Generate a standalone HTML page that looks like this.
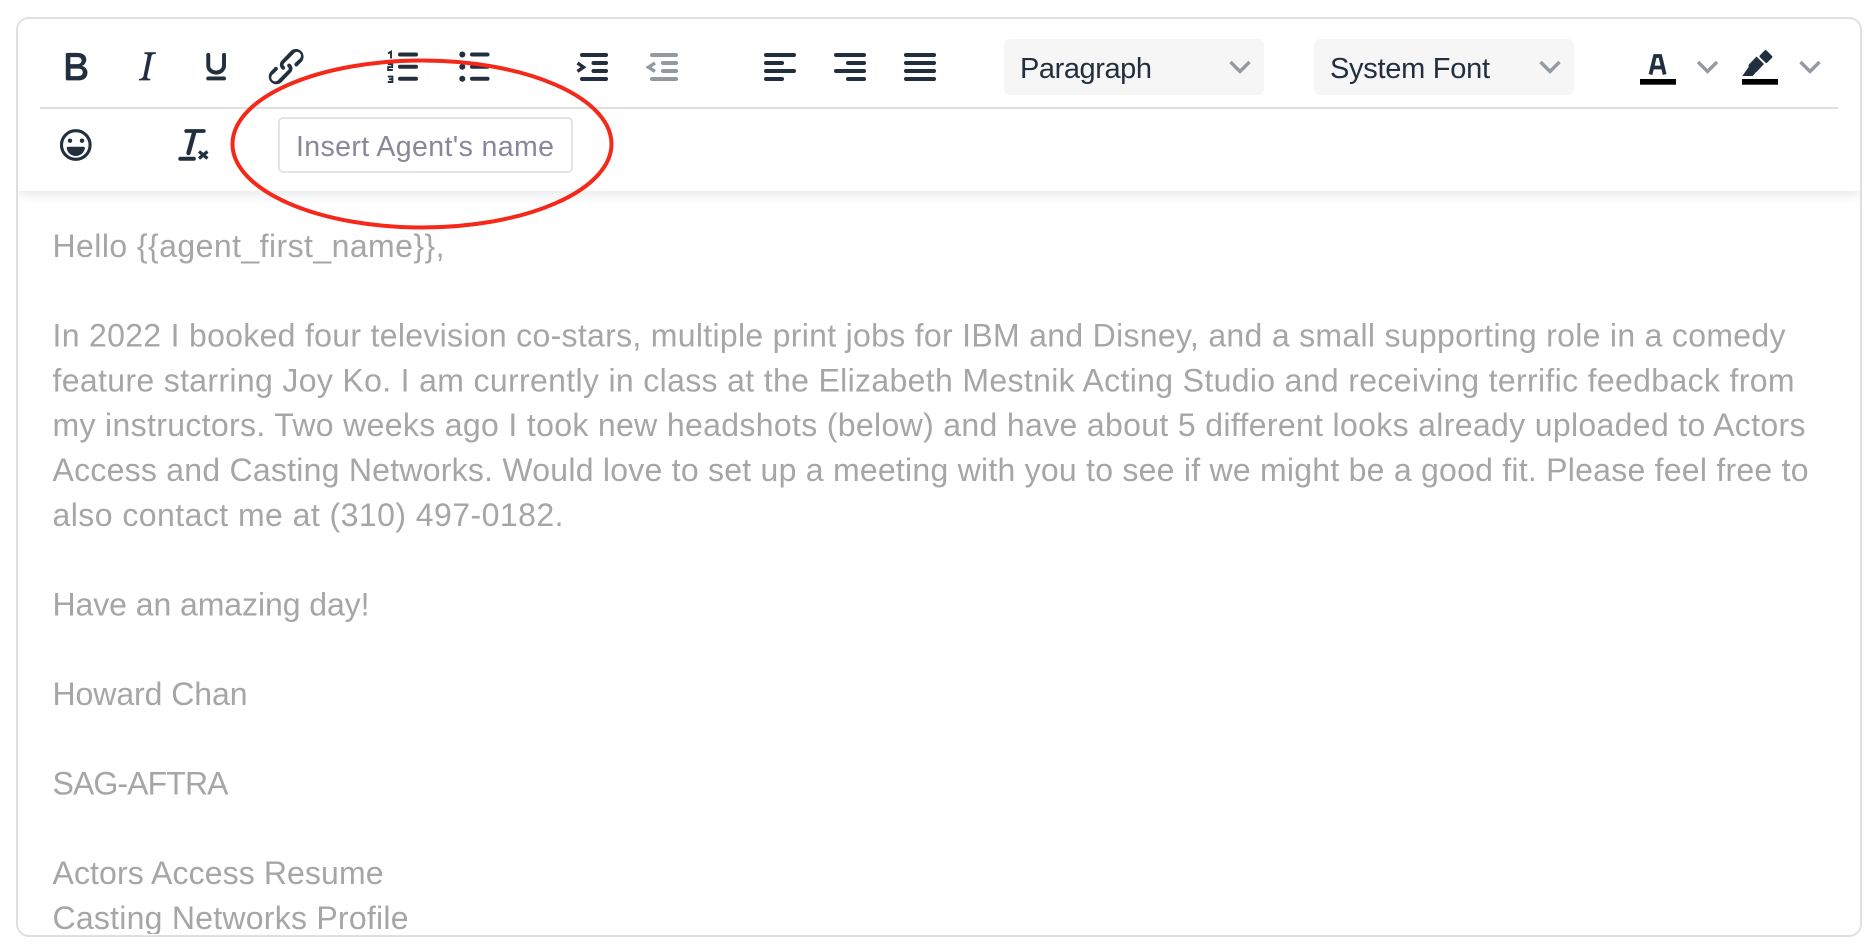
<!DOCTYPE html>
<html lang="en">
<head>
<meta charset="utf-8">
<title>Editor</title>
<style>
html,body{margin:0;padding:0;background:#fff;width:1874px;height:948px;overflow:hidden}
#box{position:absolute;left:16px;top:17px;width:1846px;height:920px;box-sizing:border-box;border:2px solid #e0e0e0;border-radius:13px;overflow:hidden;background:#fff}
#bar{position:absolute;left:0;top:0;right:0;height:172px;background:#fff;box-shadow:0 3px 10px rgba(34,47,62,.12)}
svg{position:absolute;left:0;top:0}
text{font-family:"Liberation Sans",sans-serif}
.t{font-size:32px;fill:#a6a6a6}
.i{fill:#222f3e}
.l{stroke:#222f3e;stroke-width:4;stroke-linecap:round;fill:none}
.c{stroke:#949aa1;stroke-width:3.4;fill:none}
.blur{filter:blur(.35px)}
</style>
</head>
<body>
<div id="box"><div id="bar"></div></div>
<svg width="1874" height="948" viewBox="0 0 1874 948">
<defs><clipPath id="cp"><rect x="18" y="192" width="1842" height="742"/></clipPath></defs>

<!-- toolbar separators and pills -->
<rect x="40" y="107" width="1798" height="2" fill="#e0e0e0"/>
<rect x="1004" y="39" width="260" height="56" rx="6" fill="#f6f6f6"/>
<rect x="1314" y="39" width="260" height="56" rx="6" fill="#f6f6f6"/>
<g class="blur">
<text x="1020" y="78" font-size="29" fill="#222f3e" textLength="132" lengthAdjust="spacing">Paragraph</text>
<text x="1330" y="78" font-size="29" fill="#222f3e" textLength="160" lengthAdjust="spacing">System Font</text>
</g>

<g class="blur">
<!-- bold italic underline link -->
<g class="i" transform="translate(52,43) scale(1.97)"><path d="M7.8 19c-.3 0-.5 0-.6-.2l-.2-.5V5.7c0-.2 0-.4.2-.5l.6-.2h5c1.5 0 2.7.3 3.5 1 .7.6 1.1 1.4 1.1 2.5a3 3 0 01-.6 1.9c-.4.6-1 1-1.6 1.2.4.1.9.3 1.3.6s.8.7 1 1.2c.4.4.5 1 .5 1.6 0 1.3-.4 2.3-1.3 3-.8.7-2.1 1-3.8 1H7.8zm5-8.3c.6 0 1.2-.1 1.6-.5.4-.3.6-.7.6-1.3 0-1.1-.8-1.7-2.3-1.7H9.3v3.5h3.4zm.5 6c.7 0 1.3-.1 1.7-.4.4-.4.6-.9.6-1.5s-.2-1-.7-1.4c-.4-.3-1-.4-2-.4H9.4v3.8h4z"/></g>
<g class="i" transform="translate(123,43) scale(1.97)"><path d="M16.7 4.7l-.1.9h-.3c-.6 0-1 0-1.4.3-.3.3-.4.6-.5 1.1l-2.1 9.8v.6c0 .5.4.8 1.4.8h.2l-.2.8H8l.2-.8h.2c1.1 0 1.8-.5 2-1.5l2-9.8.1-.5c0-.6-.4-.8-1.4-.8h-.3l.2-.9h5.8z"/></g>
<g class="i" transform="translate(192.5,43) scale(1.97)"><path d="M16 5c.6 0 1 .4 1 1v5.500a4 4 0 01-.4 1.800l-1 1.400a5.300 5.300 0 01-5.500 1 5 5 0 01-1.600-1c-.5-.4-.8-.9-1.100-1.400a4 4 0 01-.4-1.800V6c0-.6.4-1 1-1s1 .4 1 1v5.500c0 .3 0 .6.2 1l.6.7a3.300 3.300 0 002.200.8 3.400 3.400 0 002.200-.8c.3-.2.4-.5.6-.8l.2-.9V6c0-.6.4-1 1-1zM8 17h8c.6 0 1 .4 1 1s-.4 1-1 1H8a1 1 0 010-2z"/></g>
<g class="i" transform="translate(262.5,43) scale(1.97)"><path d="M6.2 12.3a1 1 0 011.4 1.4l-2 2a2 2 0 102.6 2.8l4.8-4.8a1 1 0 000-1.4 1 1 0 111.4-1.3 2.9 2.9 0 010 4L9.6 20a3.9 3.9 0 01-5.5-5.5l2-2zm11.6-.6a1 1 0 01-1.4-1.4l2-2a2 2 0 10-2.6-2.8L11 10.3a1 1 0 000 1.4A1 1 0 119.6 13a2.9 2.9 0 010-4L14.4 4a3.9 3.9 0 015.500 5.500l-2 2z"/></g>

<!-- ordered list -->
<path class="l" d="M400 54.500h16M400 66.700h16M400 78.700h16"/>
<path d="M388 53.500l3-1.800v6.800M387.800 64.300h4.400v2.800h-4v2.900h4.600M387.800 76.600h4.600v2.600h-3.400h3.400v2.800h-4.600" fill="none" stroke="#222f3e" stroke-width="1.900"/>
<!-- bullet list -->
<path class="l" d="M472 54.500h15.500M472 66.700h15.500M472 78.700h15.500"/>
<circle cx="462.300" cy="54.500" r="3" class="i"/><circle cx="462.300" cy="66.700" r="3" class="i"/><circle cx="462.300" cy="78.700" r="3" class="i"/>

<!-- indent / outdent -->
<path class="l" d="M582 55h24M593.500 63h12.500M593.500 71h12.500M582 79h24"/>
<path d="M577.500 63l6 4.200-6 4.200" fill="none" stroke="#222f3e" stroke-width="3.400"/>
<path d="M652 55h24M663 63h13M663 71h13M652 79h24" fill="none" stroke="#94999f" stroke-width="4" stroke-linecap="round"/>
<path d="M655 63l-6.500 4.200 6.500 4.200" fill="none" stroke="#94999f" stroke-width="3.400"/>

<!-- alignment -->
<path class="l" d="M766 55h28M766 63h16M766 71h28M766 79h16"/>
<path class="l" d="M836 55h28M848 63h16M836 71h28M848 79h16"/>
<path class="l" d="M906 55h28M906 63h28M906 71h28M906 79h28"/>

<!-- chevrons -->
<path class="c" d="M1230.500 62l9.500 9.500 9.500-9.500"/>
<path class="c" d="M1540.500 62l9.500 9.500 9.500-9.500"/>
<path class="c" d="M1698 62l9.500 9.500 9.500-9.500"/>
<path class="c" d="M1800.500 62l9.500 9.500 9.500-9.500"/>

<!-- text colour -->
<path d="M1650.500 74.500l4.500-18.500h5.200l4.500 18.500M1653 67.500h10" fill="none" stroke="#222f3e" stroke-width="3.800"/>
<rect x="1640" y="79" width="36" height="5.700" fill="#000"/>
<!-- highlight -->
<path d="M1760.700 56.200l5.600 5.600 4.900-4.900-5.600-5.600z" fill="#222f3e" stroke="#222f3e" stroke-width="2.500" stroke-linejoin="round"/>
<path d="M1756.500 56.500l7.500 7.500-8 8.500h-6.500l-1-7.500z" fill="#222f3e"/>
<path d="M1749 66.500l6.500 6.500-3 3h-10.200z" fill="#222f3e"/>
<rect x="1742" y="79" width="36" height="5.700" fill="#000"/>

<!-- emoji -->
<circle cx="75.800" cy="145" r="14.300" fill="none" stroke="#222f3e" stroke-width="3.100"/>
<circle cx="70" cy="140.700" r="2.200" class="i"/><circle cx="82" cy="140.700" r="2.200" class="i"/>
<path d="M68.300 146.700h15a1.500 1.500 0 011.600 1.700c-.8 4.400-4.500 7.600-9.100 7.600s-8.300-3.200-9.100-7.600a1.500 1.500 0 011.600-1.700z" class="i"/>

<!-- remove format -->
<path d="M186.200 131h17.600" fill="none" stroke="#222f3e" stroke-width="3.800" stroke-linecap="round"/>
<path d="M194.300 132l-5.800 21" fill="none" stroke="#222f3e" stroke-width="4.400" stroke-linecap="round"/>
<rect x="178.300" y="156.700" width="17.500" height="4" rx="2" class="i"/>
<path d="M199 151.500l8.500 7M207.500 151.500l-8.500 7" fill="none" stroke="#222f3e" stroke-width="3.200"/>
</g>

<!-- input -->
<rect x="279" y="118" width="293" height="54" rx="4" fill="#fff" stroke="#e4e4e4" stroke-width="2"/>
<text class="blur" x="296" y="156" font-size="28.500" fill="#88889a" textLength="258" lengthAdjust="spacing">Insert Agent's name</text>

<!-- body text -->
<g clip-path="url(#cp)"><g class="blur">
<text class="t" x="52.500" y="257" textLength="392" lengthAdjust="spacing">Hello {{agent_first_name}},</text>
<text class="t" x="52.500" y="346.600" textLength="1733" lengthAdjust="spacing">In 2022 I booked four television co-stars, multiple print jobs for IBM and Disney, and a small supporting role in a comedy</text>
<text class="t" x="52.500" y="391.400" textLength="1742" lengthAdjust="spacing">feature starring Joy Ko. I am currently in class at the Elizabeth Mestnik Acting Studio and receiving terrific feedback from</text>
<text class="t" x="52.500" y="436.200" textLength="1753" lengthAdjust="spacing">my instructors. Two weeks ago I took new headshots (below) and have about 5 different looks already uploaded to Actors</text>
<text class="t" x="52.500" y="481" textLength="1756" lengthAdjust="spacing">Access and Casting Networks. Would love to set up a meeting with you to see if we might be a good fit. Please feel free to</text>
<text class="t" x="52.500" y="525.800" textLength="511" lengthAdjust="spacing">also contact me at (310) 497-0182.</text>
<text class="t" x="52.500" y="615.400" textLength="317" lengthAdjust="spacing">Have an amazing day!</text>
<text class="t" x="52.500" y="705" textLength="195" lengthAdjust="spacing">Howard Chan</text>
<text class="t" x="52.500" y="794.600" textLength="176" lengthAdjust="spacing">SAG-AFTRA</text>
<text class="t" x="52.500" y="884.200" textLength="331" lengthAdjust="spacing">Actors Access Resume</text>
<text class="t" x="52.500" y="929" textLength="356" lengthAdjust="spacing">Casting Networks Profile</text>
</g></g>

<!-- annotation -->
<ellipse class="blur" cx="422" cy="144" rx="189.500" ry="83.500" fill="none" stroke="#f5281a" stroke-width="4"/>
</svg>
</body>
</html>
